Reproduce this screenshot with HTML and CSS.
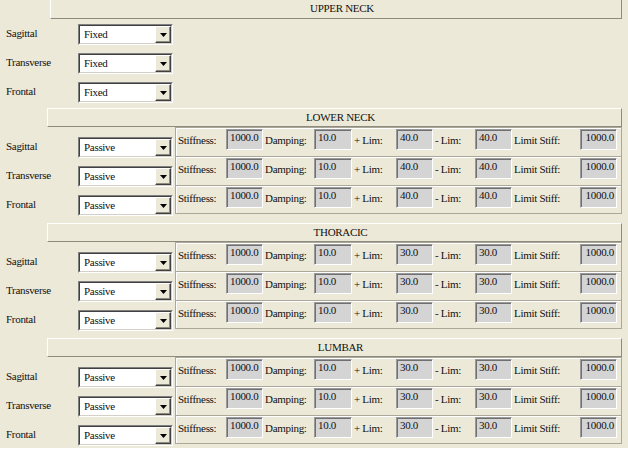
FILE: index.html
```html
<!DOCTYPE html>
<html lang="en">
<head>
    <meta charset="UTF-8">
    <title>Spine Joint Settings</title>
    <link rel="stylesheet" href="styles.css">
</head>
<body>
    <div id="panel">
        <div class="section upper">
            <div class="head">UPPER NECK</div>
            <div class="row">
                <div class="side"><span class="axis">Sagittal</span><div class="combo"><div class="field"><span class="val">Fixed</span><span class="btn"><svg width="7" height="4" viewBox="0 0 7 4"><polygon points="0,0 7,0 3.5,4" fill="#000"/></svg></span></div></div></div>
            </div>
            <div class="row">
                <div class="side"><span class="axis">Transverse</span><div class="combo"><div class="field"><span class="val">Fixed</span><span class="btn"><svg width="7" height="4" viewBox="0 0 7 4"><polygon points="0,0 7,0 3.5,4" fill="#000"/></svg></span></div></div></div>
            </div>
            <div class="row">
                <div class="side"><span class="axis">Frontal</span><div class="combo"><div class="field"><span class="val">Fixed</span><span class="btn"><svg width="7" height="4" viewBox="0 0 7 4"><polygon points="0,0 7,0 3.5,4" fill="#000"/></svg></span></div></div></div>
            </div>
        </div>

        <div class="section" data-lim="40.0">
            <div class="head">LOWER NECK</div>
        </div>
        <div class="section" data-lim="30.0">
            <div class="head">THORACIC</div>
        </div>
        <div class="section" data-lim="30.0">
            <div class="head">LUMBAR</div>
        </div>
    </div>

    <script>
        var axes = ["Sagittal", "Transverse", "Frontal"];
        var arrow = '<svg width="7" height="4" viewBox="0 0 7 4"><polygon points="0,0 7,0 3.5,4" fill="#000"/></svg>';

        function makeRow(axis, lim) {
            var row = document.createElement("div");
            row.className = "row";
            row.innerHTML =
                '<div class="side"><span class="axis">' + axis + '</span>' +
                '<div class="combo"><div class="field"><span class="val">Passive</span><span class="btn">' + arrow + '</span></div></div></div>' +
                '<div class="frame">' +
                '<span class="lbl">Stiffness:</span><span class="box">1000.0</span>' +
                '<span class="lbl">Damping:</span><span class="box">10.0</span>' +
                '<span class="lbl">+ Lim:</span><span class="box">' + lim + '</span>' +
                '<span class="lbl">- Lim:</span><span class="box">' + lim + '</span>' +
                '<span class="lbl">Limit Stiff:</span><span class="box right">1000.0</span>' +
                '</div>';
            return row;
        }

        var sections = document.querySelectorAll(".section[data-lim]");
        sections.forEach(function(section) {
            axes.forEach(function(axis) {
                section.appendChild(makeRow(axis, section.getAttribute("data-lim")));
            });
        });
    </script>
</body>
</html>
```

FILE: styles.css
```css
body {
    margin: 0;
    background-color: #fff;
    font-family: "Liberation Serif", "Times New Roman", serif;
    font-size: 11px;
    letter-spacing: -0.3px;
    color: #111;
}

#panel {
    background-color: #ece9d8;
    height: 448px;
    overflow: hidden;
}

.section {
    margin-bottom: 9px;
}

.section.upper {
    margin-bottom: 2px;
}

.head {
    margin-left: 47px;
    width: 575px;
    height: 19px;
    box-sizing: border-box;
    border-top: 1px solid #fff;
    border-left: 1px solid #fff;
    border-right: 1px solid #8d8b7e;
    border-bottom: 1px solid #8d8b7e;
    padding-left: 12px;
    text-align: center;
    line-height: 17px;
}

.upper .head {
    margin-left: 50px;
    width: 572px;
    border-top: none;
    line-height: 16px;
}

.row {
    display: flex;
    height: 29px;
}

.side {
    flex: none;
    width: 175px;
    height: 21px;
    margin-top: 10px;
    display: flex;
    align-items: center;
}

.upper .side {
    margin-top: 5px;
}

.axis {
    width: 78px;
    padding-left: 6px;
    box-sizing: border-box;
    margin-top: -3px;
}

.combo {
    width: 95px;
    height: 21px;
    box-sizing: border-box;
    border: 1px solid;
    border-color: #808080 #fff #fff #808080;
}

.field {
    height: 100%;
    box-sizing: border-box;
    border: 1px solid;
    border-color: #404040 #d4d0c8 #d4d0c8 #404040;
    background-color: #fff;
    display: flex;
}

.val {
    flex: 1;
    padding-left: 4px;
    line-height: 17px;
}

.btn {
    width: 16px;
    box-sizing: border-box;
    background-color: #ece9d8;
    border: 1px solid;
    border-color: #fff #404040 #404040 #fff;
    box-shadow: inset -1px -1px #8d8b7e;
    display: flex;
    align-items: center;
    justify-content: center;
}

.frame {
    flex: none;
    width: 447px;
    height: 29px;
    box-sizing: border-box;
    border: 1px solid #aca899;
    border-bottom: none;
    box-shadow: inset 1px 1px #fff;
    padding-top: 1px;
    display: grid;
    grid-template-columns: 50px 37px 51px 38px 44px 37px 42px 37px 68px 37px;
    align-items: start;
}

.row:last-child .frame {
    border-bottom: 1px solid #aca899;
}

.lbl {
    padding-left: 2px;
    line-height: 22px;
    white-space: nowrap;
}

.box {
    height: 21px;
    box-sizing: border-box;
    background-color: #d4d4d4;
    border: 1px solid;
    border-color: #9a9a9a #fff #fff #9a9a9a;
    box-shadow: inset 1px 1px #707070;
    padding: 1px 0 0 3px;
    line-height: 12px;
}

.box.right {
    text-align: right;
    padding: 1px 2px 0 0;
}
```
